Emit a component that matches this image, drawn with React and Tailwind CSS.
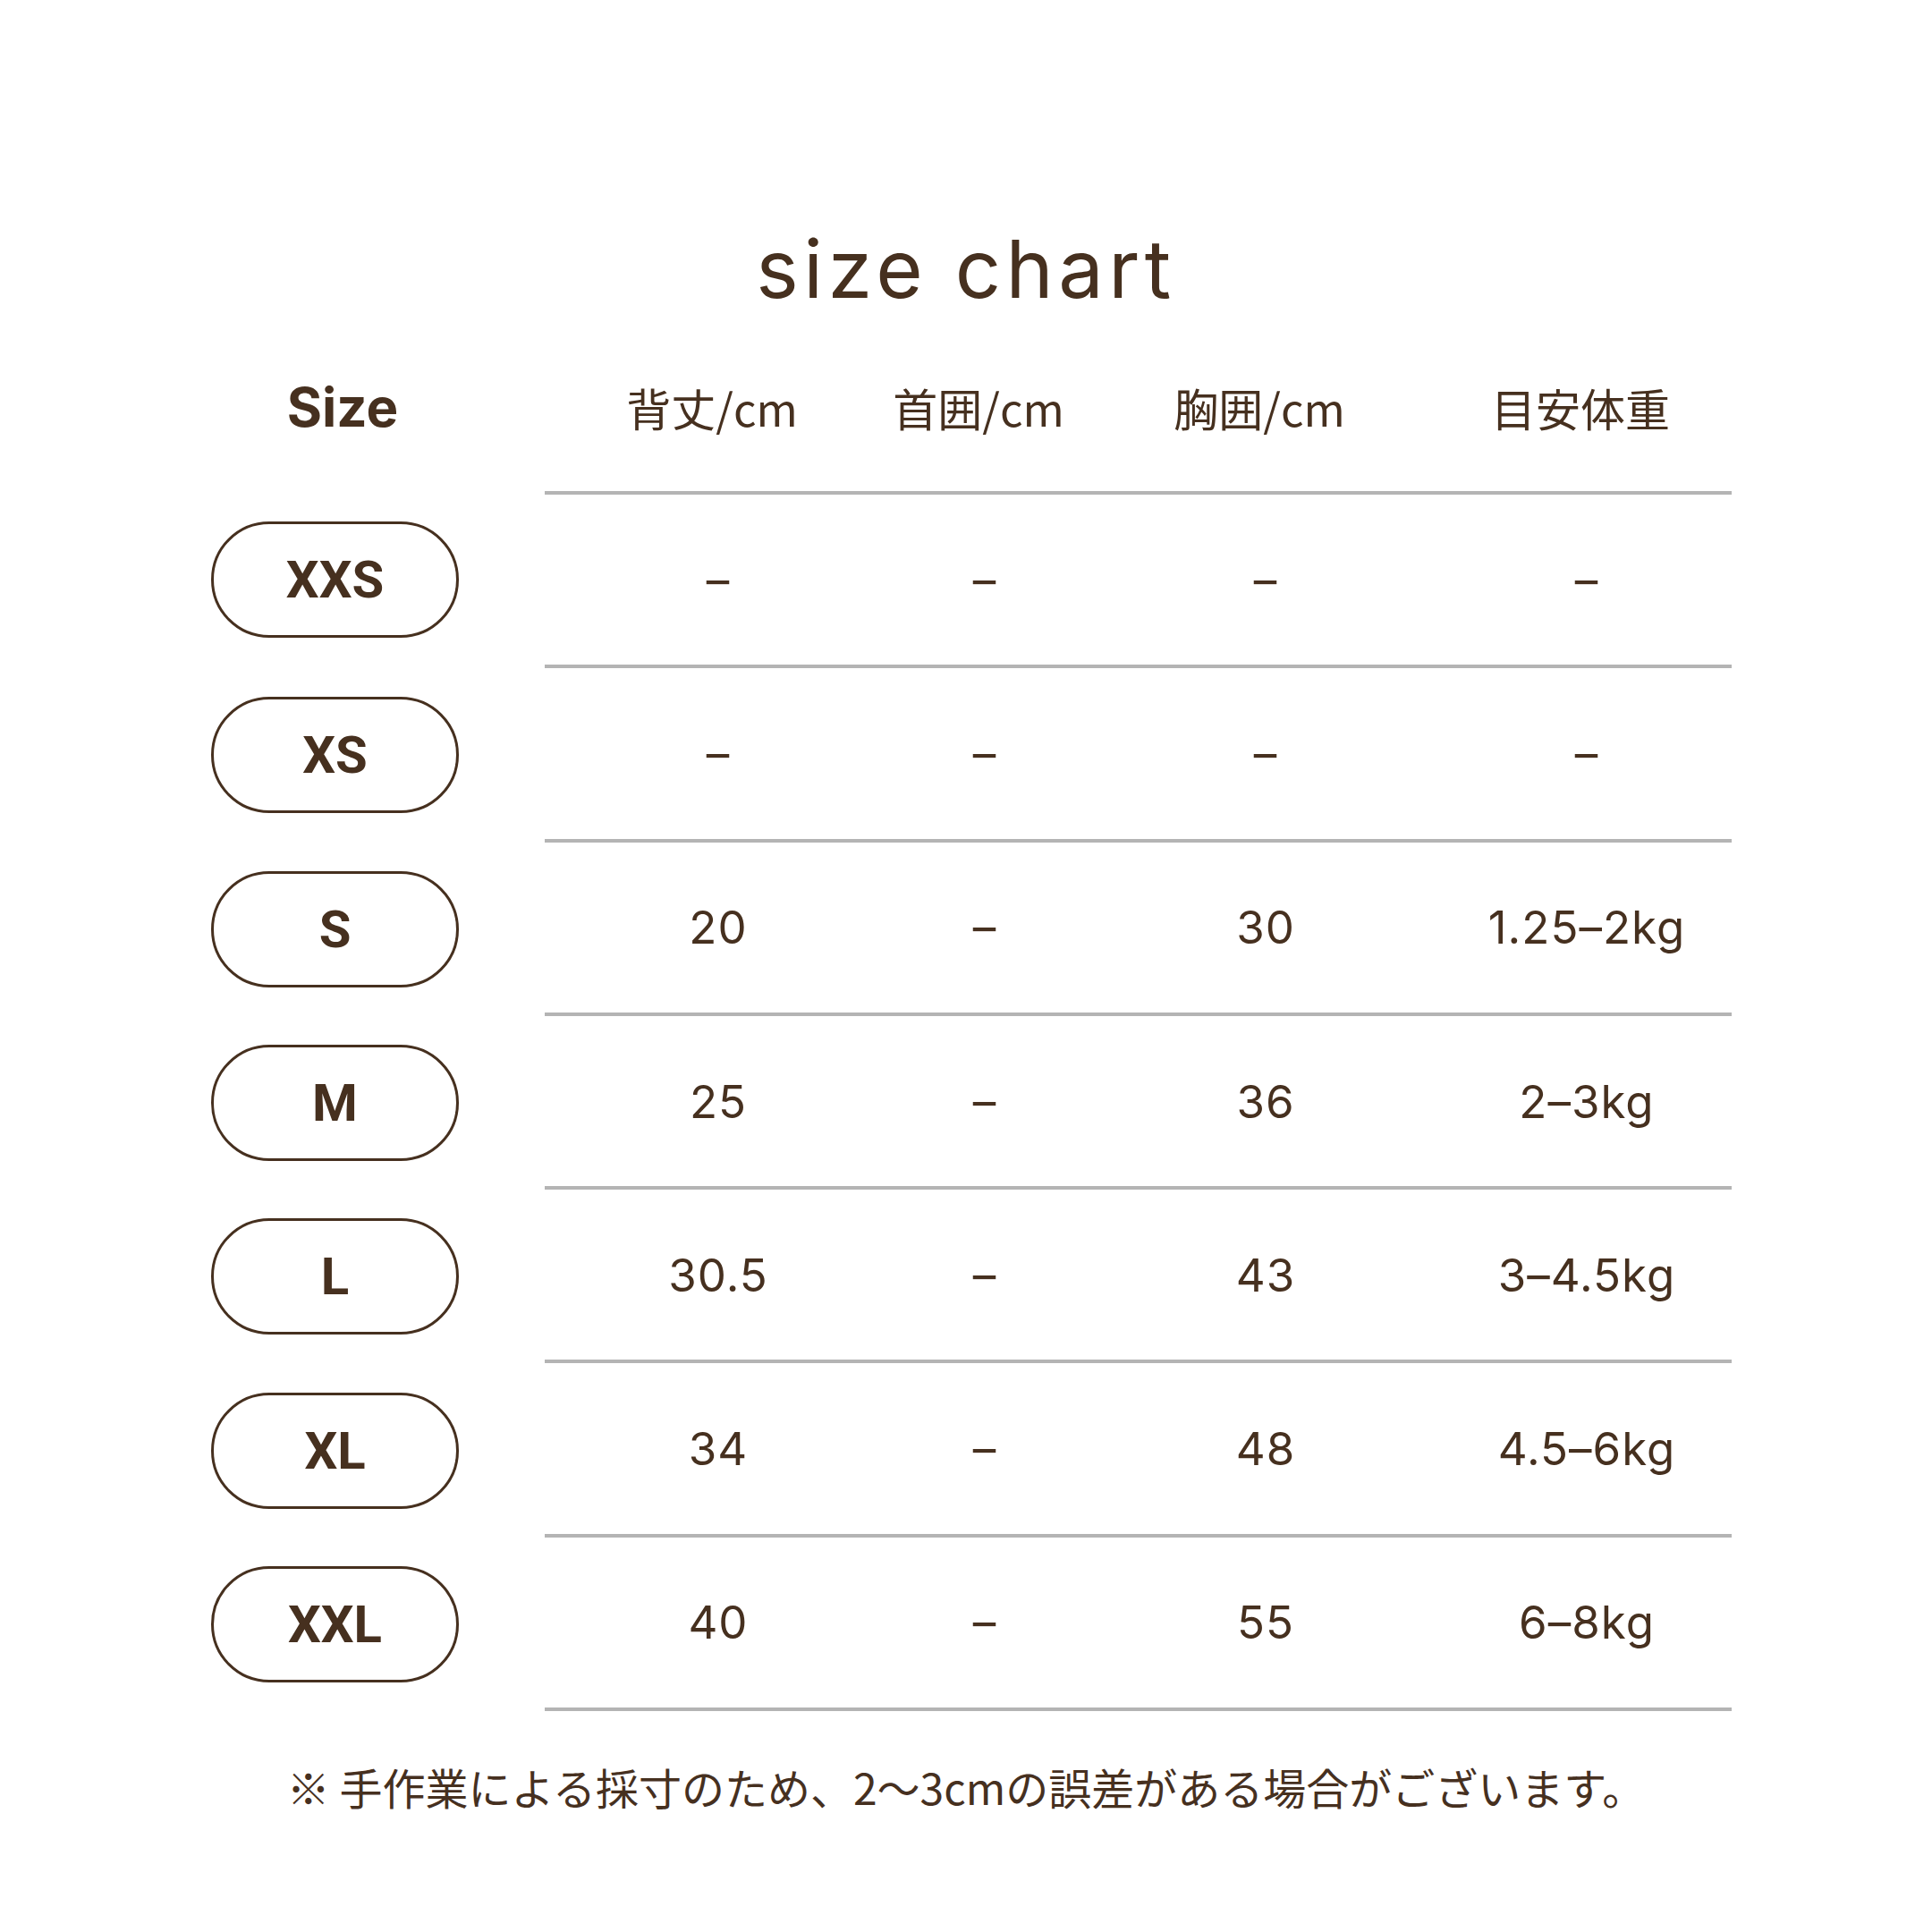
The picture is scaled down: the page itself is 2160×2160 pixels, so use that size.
const rows = [
  { size: 'XXS', back: '–', neck: '–', chest: '–', weight: '–' },
  { size: 'XS', back: '–', neck: '–', chest: '–', weight: '–' },
  { size: 'S', back: '20', neck: '–', chest: '30', weight: '1.25–2kg' },
  { size: 'M', back: '25', neck: '–', chest: '36', weight: '2–3kg' },
  { size: 'L', back: '30.5', neck: '–', chest: '43', weight: '3–4.5kg' },
  { size: 'XL', back: '34', neck: '–', chest: '48', weight: '4.5–6kg' },
  { size: 'XXL', back: '40', neck: '–', chest: '55', weight: '6–8kg' },
];

const headers = ['背丈/cm', '首囲/cm', '胸囲/cm', '目安体重'];

const cols = 'grid grid-cols-[388px_208px_420px_298px]';

export default function App() {
  return (
    <div className="w-[2160px] h-[2160px] bg-white text-[#46301f] flex flex-col">
      {/* Title */}
      <div className="pt-[256px] h-[346px] text-center font-['Inter',sans-serif] text-[90px] leading-none tracking-[0.06em]">
        size chart
      </div>

      {/* Header row */}
      <div className="mt-[15px] h-[188px] flex items-center">
        <div className="ml-[236px] w-[277px] pl-[17px] text-center font-['Inter',sans-serif] font-bold text-[60px] leading-none">
          Size
        </div>
        <div className={`ml-[96px] w-[1327px] ${cols} font-['Noto_Sans_CJK_JP',sans-serif] text-[50px] leading-none`}>
          {headers.map(h => (
            <div key={h} className="text-center pr-[14px]">{h}</div>
          ))}
        </div>
      </div>

      {/* Table */}
      <div className="flex flex-col">
        {rows.map((r, i) => (
          <div key={r.size} className="flex">
            <div className="ml-[236px] w-[277px] flex items-center justify-center">
              <div className="w-[277px] h-[130px] rounded-full border-[3px] border-[#46301f] flex items-center justify-center font-['Roboto',sans-serif] font-bold text-[58px] leading-none">
                {r.size}
              </div>
            </div>
            <div
              className={`ml-[96px] w-[1327px] h-[194.3px] border-b-[4px] border-[#b4b4b4] ${i === 0 ? 'border-t-[4px] h-[198.3px]' : ''} ${cols} items-center font-['Inter',sans-serif] text-[51px] leading-none tracking-[0.02em]`}
            >
              <div className="text-center">{r.back}</div>
              <div className="text-center">{r.neck}</div>
              <div className="text-center">{r.chest}</div>
              <div className="text-center">{r.weight}</div>
            </div>
          </div>
        ))}
      </div>

      {/* Note */}
      <div className="mt-[60px] text-center font-['Noto_Sans_CJK_JP',sans-serif] text-[48px] leading-none">
        ※ 手作業による採寸のため、2〜3cmの誤差がある場合がございます。
      </div>
    </div>
  );
}
